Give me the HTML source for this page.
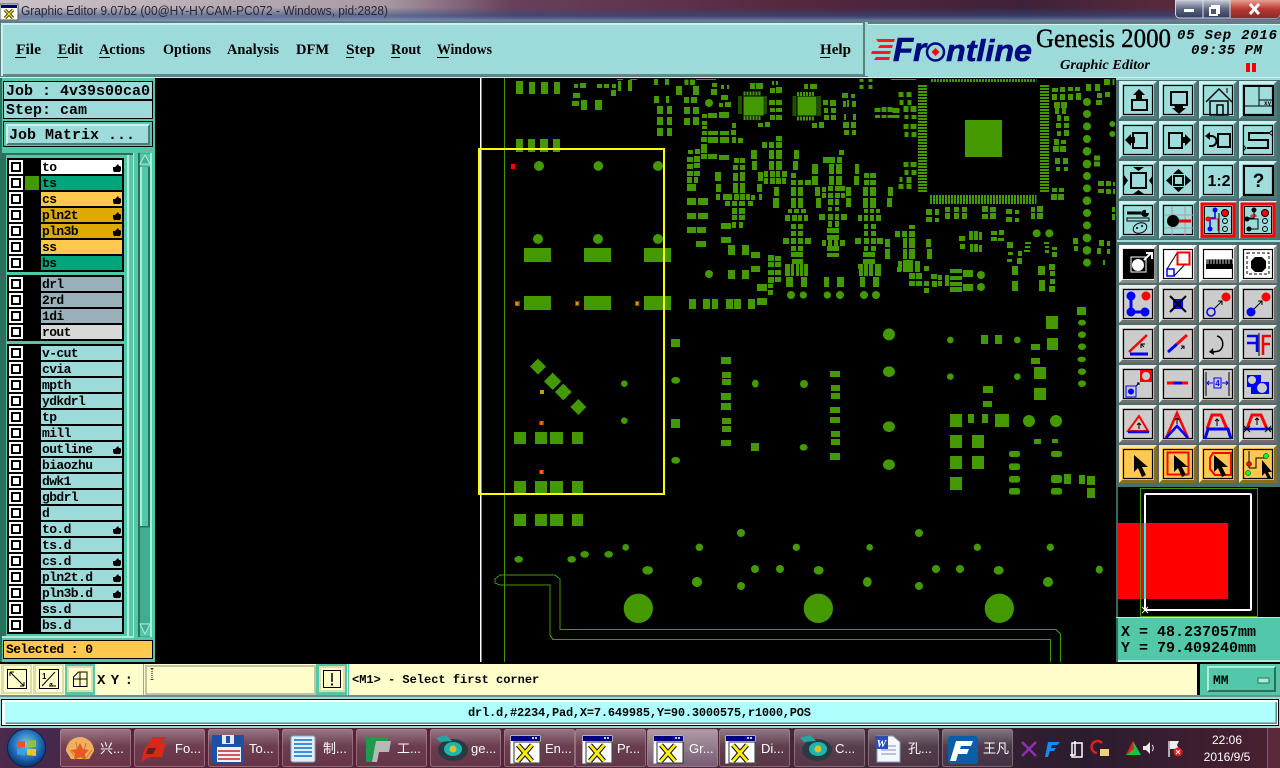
<!DOCTYPE html>
<html lang="zh"><head><meta charset="utf-8"><title>Graphic Editor</title>
<style>
html,body{margin:0;padding:0;background:#000;width:1280px;height:768px;overflow:hidden}
svg{display:block}
text{white-space:pre}
.m{font:bold 15px "Liberation Serif",serif;fill:#000}
.mono{font:bold 15px "Liberation Mono",monospace;fill:#000}
.l{font:bold 13px "Liberation Mono",monospace;letter-spacing:-.6px;fill:#000}
.s{font:bold 12px "Liberation Mono",monospace;fill:#000}
.t{font:13px "Liberation Sans","Noto Sans CJK SC",sans-serif;fill:#fff}
.c{font:12px "Liberation Sans",sans-serif;fill:#fff}
</style></head><body>
<svg width="1280" height="768" viewBox="0 0 1280 768" xmlns="http://www.w3.org/2000/svg">
<defs>
<linearGradient id="tb" x1="0" x2="1" y1="0" y2="0"><stop offset="0" stop-color="#cbc3c8"/><stop offset=".3" stop-color="#a89aa4"/><stop offset=".4" stop-color="#68405a"/><stop offset=".62" stop-color="#55283e"/><stop offset=".8" stop-color="#3e2138"/><stop offset=".92" stop-color="#5a2a3c"/><stop offset="1" stop-color="#6a3040"/></linearGradient>
<linearGradient id="tb2" x1="0" x2="0" y1="0" y2="1"><stop offset=".35" stop-color="#2a4a80" stop-opacity="0"/><stop offset=".75" stop-color="#2c4e88" stop-opacity=".6"/><stop offset="1" stop-color="#7e90b0" stop-opacity=".85"/></linearGradient>
<linearGradient id="task" x1="0" x2="1" y1="0" y2="0"><stop offset="0" stop-color="#6b2a42"/><stop offset=".1" stop-color="#5a2238"/><stop offset=".5" stop-color="#552338"/><stop offset=".7" stop-color="#3f2536"/><stop offset=".85" stop-color="#2a1c2e"/><stop offset="1" stop-color="#4a2030"/></linearGradient>
<linearGradient id="tbtn" x1="0" x2="0" y1="0" y2="1"><stop offset="0" stop-color="#fff" stop-opacity=".38"/><stop offset=".45" stop-color="#fff" stop-opacity=".12"/><stop offset="1" stop-color="#fff" stop-opacity=".08"/></linearGradient>
<linearGradient id="tact" x1="0" x2="0" y1="0" y2="1"><stop offset="0" stop-color="#fff" stop-opacity=".55"/><stop offset="1" stop-color="#cfd6f0" stop-opacity=".32"/></linearGradient>
<radialGradient id="orb" cx=".5" cy=".4" r=".6"><stop offset="0" stop-color="#7ec8f0"/><stop offset=".6" stop-color="#1f6fb8"/><stop offset="1" stop-color="#0f2f6a"/></radialGradient>
<linearGradient id="cl" x1="0" x2="0" y1="0" y2="1"><stop offset="0" stop-color="#e8a090"/><stop offset=".5" stop-color="#b83a30"/><stop offset="1" stop-color="#8a2a2a"/></linearGradient>
<linearGradient id="wb" x1="0" x2="0" y1="0" y2="1"><stop offset="0" stop-color="#c8cdd8"/><stop offset=".5" stop-color="#5d6680"/><stop offset="1" stop-color="#303a5c"/></linearGradient>
<symbol id="bt" width="38" height="38" viewBox="0 0 38 38"><rect width="38" height="38" fill="#c9f1f1"/><path d="M38 0V38H0L3 35H35V3z" fill="#4a7c7c"/><rect x="3" y="3" width="32" height="32" fill="#9fdcdc"/><rect x="4.5" y="4.5" width="29" height="29" fill="none" stroke="#000" stroke-width="1.2"/></symbol>
<symbol id="bw" width="38" height="38" viewBox="0 0 38 38"><rect width="38" height="38" fill="#fff"/><path d="M38 0V38H0L3 35H35V3z" fill="#8a8a8a"/><rect x="4.5" y="4.5" width="29" height="29" fill="none" stroke="#000" stroke-width="1.2"/></symbol>
<symbol id="bg" width="38" height="38" viewBox="0 0 38 38"><rect width="38" height="38" fill="#ececec"/><path d="M38 0V38H0L3 35H35V3z" fill="#6e6e6e"/><rect x="3" y="3" width="32" height="32" fill="#cccccc"/><rect x="4.5" y="4.5" width="29" height="29" fill="none" stroke="#000" stroke-width="1.2"/></symbol>
<symbol id="bo" width="38" height="38" viewBox="0 0 38 38"><rect width="38" height="38" fill="#ffe2a0"/><path d="M38 0V38H0L3 35H35V3z" fill="#8a6c20"/><rect x="3" y="3" width="32" height="32" fill="#ffc84f"/><rect x="4.5" y="4.5" width="29" height="29" fill="none" stroke="#000" stroke-width="1.2"/></symbol>
<symbol id="cb" width="14" height="14" viewBox="0 0 14 14"><rect width="14" height="14" fill="#fff"/><rect x="2" y="2" width="10" height="10" fill="#000"/><rect x="4" y="4" width="6" height="6" fill="#fff"/></symbol>
<symbol id="h" width="8" height="8" viewBox="0 0 8 8"><path d="M0 3h2L5 0l1 2h1l1 1v3L7 8H1L0 6z" fill="#000"/></symbol>
<symbol id="cur" width="16" height="24" viewBox="0 0 16 24"><path d="M0 0L0 17 4 13 8 22 12 20 8 12 14 12z" fill="#000"/></symbol>
<symbol id="xw" width="31" height="29" viewBox="0 0 31 29"><rect width="31" height="29" fill="#fff" stroke="#666"/><rect x="1" y="1" width="29" height="5" fill="#000080"/><rect x="22" y="2" width="2" height="2" fill="#ccc"/><rect x="25" y="2" width="2" height="2" fill="#ccc"/><rect x="4" y="7" width="26" height="21" fill="#fff" stroke="#333"/><path d="M8 10l14 16M22 10L8 26" stroke="#000" stroke-width="5"/><path d="M8 10l14 16M22 10L8 26" stroke="#ffee00" stroke-width="3"/></symbol>
</defs>

<!-- title bar -->
<rect width="1280" height="21" fill="url(#tb)"/><rect width="1280" height="21" fill="url(#tb2)"/>
<rect x="0" y="4" width="18" height="16" fill="#fff" stroke="#555"/><rect x="1" y="5" width="16" height="3" fill="#000080"/>
<path d="M5 10l8 8M13 10l-8 8" stroke="#000" stroke-width="3"/><path d="M5 10l8 8M13 10l-8 8" stroke="#ffe800" stroke-width="1.5"/>
<text x="21" y="15" textLength="367" lengthAdjust="spacingAndGlyphs" style="font:13px 'Liberation Sans',sans-serif;fill:#2a2430">Graphic Editor 9.07b2 (00@HY-HYCAM-PC072 - Windows, pid:2828)</text>
<path d="M1175.500 0v14a4 4 0 0 0 4 4H1276a4 4 0 0 0 4-4V0z" fill="url(#wb)" stroke="#cfd4e0"/>
<path d="M1230 0h50v14a4 4 0 0 1-4 4h-46z" fill="url(#cl)"/><path d="M1203 0v18M1230 0v18" stroke="#dde" stroke-width="1"/>
<rect x="1184" y="9" width="10" height="3" fill="#fff"/>
<rect x="1212" y="6" width="7" height="7" fill="none" stroke="#fff" stroke-width="2"/><rect x="1210" y="8" width="7" height="7" fill="#4b5470" stroke="#fff" stroke-width="2"/>
<path d="M1250 4l9 10M1259 4l-9 10" stroke="#fff" stroke-width="3"/>

<!-- menu bar -->
<rect y="21" width="1280" height="57" fill="#5e7f7f"/>
<rect x="1" y="23" width="862" height="53" fill="#c9f1f1"/><rect x="3" y="25" width="860" height="49" fill="#9ddbdb"/><rect x="3" y="74" width="860" height="2" fill="#5f8a8a"/>
<rect x="865" y="22" width="3" height="54" fill="#9ddbdb"/><rect x="0" y="77" width="1280" height="1" fill="#c9f1f1"/>
<rect x="868" y="24" width="412" height="53" fill="#9ddbdb"/><rect x="868" y="24" width="412" height="1" fill="#d5f5f5"/>
<g><text class="m" x="16" y="54" textLength="25" lengthAdjust="spacingAndGlyphs">File</text><text class="m" x="58" y="54" textLength="25" lengthAdjust="spacingAndGlyphs">Edit</text><text class="m" x="99" y="54" textLength="46" lengthAdjust="spacingAndGlyphs">Actions</text><text class="m" x="163" y="54" textLength="48" lengthAdjust="spacingAndGlyphs">Options</text><text class="m" x="227" y="54" textLength="52" lengthAdjust="spacingAndGlyphs">Analysis</text><text class="m" x="296" y="54" textLength="33" lengthAdjust="spacingAndGlyphs">DFM</text><text class="m" x="346" y="54" textLength="29" lengthAdjust="spacingAndGlyphs">Step</text><text class="m" x="391" y="54" textLength="30" lengthAdjust="spacingAndGlyphs">Rout</text><text class="m" x="437" y="54" textLength="55" lengthAdjust="spacingAndGlyphs">Windows</text><text class="m" x="820" y="54" textLength="31" lengthAdjust="spacingAndGlyphs">Help</text></g>
<path d="M15 57.500h11M57 57.500h11M99 57.500h11M346 57.500h8M391 57.500h9M437 57.500h12M820 57.500h10" stroke="#000"/>

<!-- logo -->
<path d="M876 39h19l-1 3h-16zM880 45h13l-1 3h-14zM872 51h19l-1 3h-19zM876 57h14l-1 3h-15z" fill="#ff1a1a"/>
<text x="893" y="61" textLength="33" lengthAdjust="spacingAndGlyphs" style="font:italic bold 33px 'Liberation Sans',sans-serif;fill:#000a80;stroke:#000a80;stroke-width:.6">Fr</text>
<circle cx="935.500" cy="52" r="8.500" fill="none" stroke="#000a80" stroke-width="2.500"/><path d="M935.500 48l4 4-4 4-4-4z" fill="#f00"/>
<text x="946" y="61" textLength="86" lengthAdjust="spacingAndGlyphs" style="font:italic bold 31px 'Liberation Sans',sans-serif;fill:#000a80;stroke:#000a80;stroke-width:.6">ntline</text>
<text x="1036" y="47" textLength="135" lengthAdjust="spacingAndGlyphs" style="font:26px 'Liberation Serif',serif;fill:#000;stroke:#000;stroke-width:.4">Genesis 2000</text>
<text x="1060" y="69" textLength="90" lengthAdjust="spacingAndGlyphs" style="font:italic bold 14px 'Liberation Serif',serif;fill:#000">Graphic Editor</text>
<text x="1177" y="39" textLength="100" style="font:italic bold 14px 'Liberation Mono',monospace;fill:#000">05 Sep 2016</text>
<text x="1191" y="54" textLength="71" style="font:italic bold 14px 'Liberation Mono',monospace;fill:#000">09:35 PM</text>
<rect x="1246" y="63" width="4" height="9" fill="#f00"/><rect x="1252" y="63" width="4" height="9" fill="#f00"/>

<!-- canvas -->
<rect x="156" y="78" width="961" height="586" fill="#000"/>
<g fill="#449900" shape-rendering="crispEdges">
<g transform="translate(640 78) scale(.33333)">
<path d="M42 3h12v18h-12zM75 3h12v18h-12zM133 5h12v16h-12zM150 5h15v16h-15zM108 24h18v27h-18zM159 24h18v27h-18zM42 54h15v21h-15zM78 54h9v21h-9zM132 57h15v18h-15zM153 57h18v18h-18zM51 84h18v24h-18zM81 84h15v24h-15zM132 87h18v21h-18zM159 87h18v21h-18zM51 117h18v24h-18zM81 117h15v24h-15zM132 120h18v21h-18zM159 117h18v24h-18zM51 150h18v24h-18zM81 150h15v24h-15z
M168 3h60v3h-60zM216 15h15v12h-15zM213 33h18v18h-18zM243 21h9v12h-9zM261 21h6v12h-6zM243 51h21v15h-21zM237 75h12v12h-12zM255 72h18v15h-18z
M310 55h60v58h-60zM472 55h58v58h-58zM330 15h15v18h-15zM348 15h21v18h-21zM396 9h6v12h-6zM408 9h6v12h-6zM390 30h15v15h-15zM408 27h18v18h-18zM387 66h18v15h-18zM408 66h18v15h-18zM390 90h15v12h-15zM408 90h18v12h-18zM390 111h15v15h-15zM408 111h18v15h-18zM354 135h15v12h-15zM375 132h15v15h-15z
M492 18h12v15h-12zM510 18h21v15h-21zM549 66h15v15h-15zM570 66h18v18h-18zM552 90h12v15h-12zM573 90h15v15h-15zM552 111h15v15h-15zM573 111h15v15h-15zM516 135h15v15h-15zM537 132h15v18h-15z
M606 45h18v15h-18zM633 48h12v12h-12zM609 69h9v18h-9zM621 66h6v21h-6zM636 69h12v18h-12zM612 108h6v18h-6zM639 108h9v18h-9zM609 132h18v18h-18zM633 132h15v18h-15zM612 156h15v15h-15zM636 156h12v15h-12zM658 3h12v9h-12zM685 3h12v9h-12zM658 21h12v12h-12zM685 21h12v12h-12zM753 3h75v3h-75z
M775 42h15v15h-15zM799 42h15v15h-15zM778 66h12v15h-12zM802 66h12v15h-12zM790 84h15v18h-15zM811 84h18v18h-18zM703 90h18v12h-18zM724 87h15v15h-15zM742 87h15v15h-15zM757 90h21v15h-21zM705 111h15v9h-15zM724 111h15v9h-15zM742 111h36v9h-36zM793 111h12v12h-12zM814 111h15v12h-15zM790 138h15v15h-15zM811 138h18v15h-18zM793 162h12v15h-12zM814 162h15v15h-15zM790 252h15v15h-15zM811 252h18v15h-18zM793 276h12v15h-12zM814 276h15v15h-15zM778 297h9v15h-9zM799 297h15v18h-15zM775 318h15v15h-15zM799 318h15v15h-15z
M975 126h111v111h-111z
M1236 30h18v12h-18zM1260 27h15v15h-15zM1284 27h15v12h-15zM1305 27h15v12h-15zM1236 48h15v18h-15zM1260 48h15v18h-15zM1284 48h15v18h-15zM1308 45h15v21h-15zM1338 18h15v21h-15zM1365 18h15v21h-15zM1392 3h18v18h-18zM1417 3h6v18h-6zM1371 45h15v15h-15zM1395 42h15v15h-15zM1368 66h18v15h-18zM1242 72h18v18h-18zM1263 72h18v18h-18zM1245 90h12v18h-12zM1266 90h12v18h-12zM1251 111h12v18h-12zM1272 114h15v15h-15zM1248 135h15v15h-15zM1272 135h15v15h-15zM1251 159h12v15h-12zM1272 156h15v18h-15zM1242 183h15v18h-15zM1263 186h15v12h-15zM1239 204h18v18h-18zM1260 204h18v18h-18zM1245 240h15v18h-15zM1269 240h15v18h-15zM1248 267h12v12h-12zM1272 267h12v12h-12zM1236 330h15v12h-15zM1257 330h15v12h-15zM1233 348h18v18h-18zM1254 348h18v18h-18z
M1362 232h18v15h-18zM1362 250h18v15h-18zM1374 309h18v15h-18zM1398 309h15v15h-15zM1419 312h6v12h-6zM1374 333h18v12h-18zM1398 333h15v15h-15zM1419 333h6v15h-6zM1416 387h9v15h-9zM1416 408h9v18h-9zM1299 480h15v18h-15zM1302 504h12v15h-12zM1377 486h15v18h-15zM1401 489h9v15h-9zM1371 510h12v18h-12zM1401 513h9v15h-9zM1389 546h6v15h-6z
M144 216h15v12h-15zM165 213h15v15h-15zM141 237h18v15h-18zM162 234h18v18h-18zM141 258h18v15h-18zM162 255h18v15h-18zM141 279h18v15h-18zM162 279h18v15h-18zM141 297h15v18h-15zM162 297h12v18h-12zM141 318h27v21h-27zM141 360h27v21h-27zM174 360h30v21h-30zM141 405h27v18h-27zM174 405h30v18h-30zM141 447h27v18h-27zM171 447h27v18h-27zM168 489h30v18h-30z
M186 108h15v12h-15zM204 105h27v15h-27zM237 102h30v18h-30zM186 129h15v12h-15zM186 144h15v9h-15zM186 159h15v12h-15zM204 159h30v12h-30zM240 159h27v12h-27zM273 156h15v15h-15zM183 177h18v15h-18zM204 177h30v18h-30zM240 177h27v18h-27zM276 177h12v18h-12zM294 180h15v15h-15zM276 135h12v15h-12zM183 198h18v15h-18zM183 213h18v12h-18zM183 228h18v15h-18zM204 228h27v15h-27zM237 231h30v15h-30z
M225 282h18v27h-18zM228 318h15v24h-15zM228 348h12v18h-12zM249 348h15v18h-15zM264 348h12v18h-12zM282 348h15v18h-15zM300 348h15v18h-15zM318 348h12v18h-12zM333 351h12v15h-12zM357 348h9v18h-9zM255 369h15v15h-15zM276 369h15v15h-15zM297 369h18v15h-18zM324 369h15v15h-15zM282 240h15v15h-15zM300 240h15v15h-15zM279 261h15v15h-15zM300 261h15v15h-15zM279 285h15v24h-15zM300 282h15v27h-15zM279 315h15v30h-15zM300 315h15v30h-15zM354 282h15v27h-15zM351 318h15v24h-15zM333 216h18v27h-18zM336 249h15v27h-15zM366 192h15v18h-15zM387 192h15v18h-15zM408 174h18v15h-18zM408 192h18v18h-18zM387 216h15v27h-15zM408 216h18v27h-18zM387 249h15v27h-15zM408 249h18v27h-18zM372 279h12v18h-12zM390 279h15v18h-15zM408 279h12v18h-12zM426 279h15v18h-15zM372 300h12v18h-12zM390 300h15v18h-15zM408 300h15v18h-15zM426 300h12v18h-12zM402 327h15v27h-15zM399 360h18v30h-18z
M276 390h15v18h-15zM297 390h18v18h-18zM276 411h15v15h-15zM297 411h18v15h-18zM276 432h12v18h-12zM297 432h12v18h-12zM243 435h30v18h-30zM243 477h30v18h-30zM264 501h21v30h-21zM306 501h21v30h-21zM333 522h27v18h-27zM333 564h27v18h-27zM264 576h21v27h-21zM306 576h21v27h-21z
M384 531h18v18h-18zM405 534h18v15h-18zM384 552h18v15h-18zM405 552h18v15h-18zM384 576h18v15h-18zM405 576h18v15h-18zM384 597h18v18h-18zM405 597h18v15h-18zM384 618h15v12h-15zM384 636h15v15h-15zM351 618h30v21h-30zM351 660h30v21h-30zM147 663h21v30h-21zM189 663h21v30h-21zM216 663h18v30h-18zM258 663h21v30h-21zM282 663h21v30h-21zM324 663h21v30h-21z
M462 216h15v27h-15zM459 249h15v27h-15zM453 285h15v15h-15zM453 306h15v15h-15zM474 306h15v15h-15zM495 306h18v15h-18zM453 327h15v27h-15zM474 327h15v27h-15zM453 360h15v30h-15zM474 360h15v30h-15zM444 393h12v12h-12zM462 393h15v12h-15zM483 393h15v12h-15zM435 411h15v18h-15zM456 411h15v18h-15zM474 411h12v18h-12zM492 411h12v18h-12zM453 438h15v15h-15zM474 438h15v15h-15zM453 459h15v15h-15zM474 459h15v15h-15zM429 480h18v18h-18zM453 480h15v18h-15zM474 480h15v18h-15zM495 480h18v18h-18zM453 504h15v15h-15zM474 504h15v15h-15zM453 522h36v15h-36zM456 543h33v15h-33zM435 558h15v36h-15zM453 558h9v36h-9zM468 558h9v36h-9zM480 558h9v36h-9zM492 558h12v36h-12zM438 597h21v30h-21zM483 597h18v30h-18z
M516 258h18v30h-18zM516 294h18v27h-18zM525 327h15v27h-15zM528 360h15v30h-15zM597 216h15v15h-15zM591 237h15v18h-15zM549 237h18v18h-18zM567 237h18v18h-18zM567 258h15v30h-15zM588 258h18v30h-18zM567 294h15v27h-15zM588 294h18v27h-18zM645 258h12v30h-12zM642 294h15v27h-15zM546 327h12v15h-12zM564 324h15v15h-15zM585 324h15v15h-15zM600 324h15v15h-15zM546 345h12v15h-12zM564 345h15v15h-15zM585 345h15v15h-15zM603 345h12v15h-12zM618 327h15v27h-15zM618 360h15v27h-15zM564 363h15v18h-15zM585 363h12v18h-12zM564 387h12v12h-12zM585 387h12v12h-12zM537 408h18v18h-18zM564 408h15v18h-15zM585 408h12v18h-12zM603 408h18v18h-18zM564 429h12v18h-12zM585 429h12v18h-12zM561 450h36v15h-36zM561 471h36v15h-36zM546 486h12v18h-12zM564 486h12v18h-12zM582 486h12v18h-12zM600 486h15v18h-15zM561 504h36v15h-36zM561 525h36v12h-36zM552 597h15v30h-15zM591 597h21v30h-21z
M672 285h15v15h-15zM690 285h18v15h-18zM672 306h15v15h-15zM690 306h18v15h-18zM669 327h15v27h-15zM690 327h18v27h-18zM669 360h15v30h-15zM690 360h18v30h-18zM744 327h15v27h-15zM741 360h15v27h-15zM672 393h12v12h-12zM690 393h12v12h-12zM708 393h12v12h-12zM654 411h12v18h-12zM672 411h12v18h-12zM690 411h12v18h-12zM708 411h15v18h-15zM672 438h12v15h-12zM693 438h15v15h-15zM672 459h12v15h-12zM693 459h15v15h-15zM645 480h18v18h-18zM672 480h15v18h-15zM693 480h15v18h-15zM711 480h18v18h-18zM735 483h15v24h-15zM735 513h15v30h-15zM672 504h12v15h-12zM693 504h15v15h-15zM669 522h36v15h-36zM669 543h36v15h-36zM654 558h12v15h-12zM657 558h12v36h-12zM672 558h12v36h-12zM687 558h12v36h-12zM705 558h18v36h-18zM660 597h15v30h-15zM699 597h18v30h-18z
M807 441h18v12h-18zM765 459h15v18h-15zM786 459h15v18h-15zM807 459h18v18h-18zM789 480h12v30h-12zM807 480h18v30h-18zM789 513h12v30h-12zM807 513h18v30h-18zM858 483h15v24h-15zM861 513h15v30h-15zM771 567h12v15h-12zM774 549h12v30h-12zM789 546h18v36h-18zM807 546h12v36h-12zM825 549h15v33h-15zM852 564h15v15h-15zM807 585h18v18h-18zM828 585h18v18h-18zM873 588h18v15h-18zM894 591h12v15h-12zM807 609h18v15h-18zM828 609h18v15h-18zM852 609h15v15h-15zM876 609h15v18h-15zM894 609h12v15h-12zM852 630h15v15h-15zM915 591h12v18h-12zM915 609h12v15h-12zM930 573h36v12h-36zM930 594h36v12h-36zM930 612h36v12h-36zM930 627h36v15h-36zM969 576h30v21h-30zM969 618h30v21h-30z
M858 393h18v18h-18zM885 393h12v18h-12zM858 417h18v15h-18zM885 420h12v12h-12zM915 387h15v15h-15zM942 387h15v15h-15zM966 387h15v15h-15zM915 405h15v18h-15zM942 405h15v18h-15zM966 405h15v18h-15zM1026 384h18v18h-18zM1050 387h18v15h-18zM1026 408h18v15h-18zM1050 405h18v18h-18zM1098 393h18v15h-18zM1125 396h12v12h-12zM1098 417h18v15h-18zM1125 420h12v12h-12zM1173 387h12v15h-12zM1191 384h18v18h-18zM1173 405h12v18h-12zM1191 405h18v18h-18z
M957 474h18v15h-18zM960 498h15v15h-15zM987 459h12v27h-12zM1002 459h12v27h-12zM1017 462h9v24h-9zM990 498h9v24h-9zM1002 498h12v24h-12zM1017 501h9v21h-9zM1053 459h18v12h-18zM1077 456h15v15h-15zM1053 477h18v12h-18zM1074 480h18v9h-18z
M1101 492h18v18h-18zM1104 522h15v9h-15zM1134 519h12v15h-12zM1101 543h15v9h-15zM1131 540h15v18h-15zM1155 492h18v6h-18zM1155 504h15v6h-15zM1152 516h18v6h-18zM1212 492h15v6h-15zM1215 504h12v6h-12zM1215 516h12v9h-12zM1236 507h15v9h-15zM1236 522h15v15h-15zM1116 564h18v27h-18zM1116 609h18v30h-18zM1194 564h21v27h-21zM1197 606h18v33h-18zM1227 558h18v18h-18zM1230 579h15v15h-15zM1230 603h15v15h-15zM1227 624h18v18h-18zM1311 687h27v24h-27zM1218 714h36v6h-36z"/>
<g fill="none" stroke="#449900">
<path stroke-width="27" stroke-dasharray="6 3" d="M847.500 21V342M1213.500 21V342"/>
<path stroke-width="9" stroke-dasharray="6 3" d="M873 7.500H1190"/>
<path stroke-width="27" stroke-dasharray="6 3" d="M870 364.500H1190"/>
<path stroke-width="12" stroke-dasharray="3 3" d="M300 55V110M375 55V110M463 55V113M537 55V113"/>
<path stroke-width="12" stroke-dasharray="6 3" d="M310 46H365M471 48H525"/>
<path stroke-width="12" stroke-dasharray="6 3" d="M310 120H365M471 122H522"/>
</g>
<g shape-rendering="geometricPrecision">
<circle cx="207" cy="75" r="12"/><circle cx="207" cy="588" r="12"/><circle cx="1341" cy="72" r="12"/><circle cx="1341" cy="108" r="12"/><circle cx="1341" cy="145" r="12"/><circle cx="1341" cy="183" r="12"/><circle cx="1341" cy="220" r="13"/><circle cx="1341" cy="258" r="13"/><circle cx="1341" cy="294" r="12"/><circle cx="1341" cy="331" r="12"/><circle cx="1341" cy="368" r="13"/><circle cx="1341" cy="405" r="12"/><circle cx="1341" cy="442" r="12"/><circle cx="1341" cy="480" r="13"/><circle cx="1341" cy="517" r="13"/><circle cx="1341" cy="554" r="12"/><circle cx="1417" cy="138" r="9"/><circle cx="1417" cy="168" r="9"/>
<circle cx="1023" cy="591" r="12"/><circle cx="1023" cy="627" r="12"/><circle cx="1190" cy="466" r="12"/><circle cx="1228" cy="466" r="12"/><circle cx="453" cy="651" r="12"/><circle cx="490" cy="651" r="11"/><circle cx="562" cy="651" r="11"/><circle cx="600" cy="651" r="12"/><circle cx="672" cy="651" r="12"/><circle cx="708" cy="651" r="12"/>
</g></g>
<g transform="translate(470 78) scale(.33333)">
<path d="M138 9h21v39h-21zM177 12h18v36h-18zM213 12h21v36h-21zM252 12h18v36h-18zM138 183h21v39h-21zM174 183h21v39h-21zM210 183h24v39h-24zM249 183h21v39h-21zM312 18h12v12h-12zM330 15h18v15h-18zM381 18h15v12h-15zM402 18h15v12h-15zM426 18h12v12h-12zM309 45h21v15h-21zM306 69h21v15h-21zM333 66h18v30h-18zM375 66h21v30h-21zM423 36h15v18h-15zM444 9h9v30h-9zM474 6h12v33h-12zM441 3h18v3h-18zM480 3h21v3h-21zM162 510h81v42h-81zM342 510h81v42h-81zM522 510h81v42h-81zM162 654h81v42h-81zM342 654h81v42h-81zM522 654h81v42h-81z"/>
<g shape-rendering="geometricPrecision"><circle cx="207" cy="264" r="15"/><circle cx="385" cy="264" r="14.500"/><circle cx="564" cy="264" r="15"/><circle cx="204" cy="483" r="15"/><circle cx="384" cy="483" r="15"/><circle cx="564" cy="483" r="15"/></g>
<path d="M123 258h12v15h-12zM135 669h15v15h-15zM315 669h12v15h-12zM495 669h12v15h-12z" fill="#f00"/>
<path d="M136 672h10v10h-10zM318 672h8v9h-8zM498 672h7v9h-7z" fill="#c8a000"/>
</g>
<g transform="translate(470 340) scale(.33333)">
<path d="M132 276h36v36h-36zM195 276h36v36h-36zM240 276h39v36h-39zM306 276h33v36h-33zM132 423h36v36h-36zM195 423h36v36h-36zM240 423h39v36h-39zM306 423h33v36h-33zM132 522h36v36h-36zM195 522h36v36h-36zM240 522h39v36h-39zM306 522h33v36h-33zM603 0h27v21h-27zM603 237h27v27h-27z"/>
<g shape-rendering="geometricPrecision">
<path d="M204 56l24 24-24 24-24-24zM248 98l26 26-26 26-26-26zM280 131l25 25-25 25-25-25zM325 177l24 24-24 24-24-24z"/>
<circle cx="463" cy="131" r="10"/><circle cx="463" cy="242" r="10"/><ellipse cx="617" cy="121" rx="13" ry="10"/><ellipse cx="617" cy="361" rx="13" ry="10"/><ellipse cx="146" cy="658" rx="13" ry="10"/><ellipse cx="305" cy="658" rx="13" ry="10"/><ellipse cx="344" cy="643" rx="13" ry="10"/><ellipse cx="416" cy="643" rx="13" ry="10"/><circle cx="467" cy="622" r="10"/><circle cx="688" cy="622" r="11"/><ellipse cx="533" cy="691" rx="16" ry="13"/><circle cx="681" cy="726" r="15"/><circle cx="505" cy="805" r="44"/>
</g>
<path d="M210 150h12v12h-12z" fill="#c8a000"/>
<path d="M207 243h15v12h-15zM207 390h15v12h-15z" fill="#f00"/><path d="M211 243h7v12h-7zM211 390h7v12h-7z" fill="#c8a000"/>
</g>
<g transform="translate(660 310) scale(.33333)">
<path d="M33 87h27v24h-27zM33 327h27v27h-27zM183 141h30v21h-30zM186 186h27v18h-27zM186 207h27v18h-27zM183 249h30v21h-30zM183 279h30v21h-30zM186 324h27v18h-27zM186 348h27v18h-27zM183 390h30v18h-30zM510 183h30v18h-30zM513 225h27v18h-27zM513 249h27v18h-27zM510 291h30v18h-30zM510 321h30v18h-30zM513 363h27v18h-27zM513 387h27v18h-27zM510 429h30v21h-30zM273 399h24v24h-24zM963 75h21v27h-21zM1005 75h21v27h-21zM1158 18h36v39h-36zM1161 84h33v36h-33zM1113 102h27v18h-27zM1113 144h27v18h-27zM1122 171h36v36h-36zM1122 234h36v36h-36zM969 228h30v21h-30zM969 273h27v18h-27zM870 312h36v39h-36zM924 312h18v27h-18zM966 312h18v27h-18zM1005 312h42v39h-42zM1122 387h21v15h-21zM1176 387h18v12h-18zM870 375h36v39h-36zM936 375h36v39h-36zM870 438h36v39h-36zM936 438h36v39h-36zM870 501h36v39h-36zM1212 492h21v30h-21zM1257 495h18v27h-18zM1281 498h24v27h-24zM1281 534h24v30h-24zM1251 0h27v15h-27z"/>
<g shape-rendering="geometricPrecision">
<ellipse cx="47" cy="211" rx="13" ry="10"/><ellipse cx="47" cy="451" rx="13" ry="10"/><ellipse cx="286" cy="221" rx="10" ry="12"/><circle cx="432" cy="222" r="12"/><ellipse cx="431" cy="412" rx="12" ry="10"/><circle cx="687" cy="73" r="18"/><ellipse cx="687" cy="185" rx="18" ry="16"/><ellipse cx="687" cy="350" rx="18" ry="16"/><ellipse cx="687" cy="464" rx="18" ry="16"/><circle cx="871" cy="90" r="10"/><circle cx="871" cy="200" r="10"/><circle cx="1072" cy="90" r="10"/><circle cx="1072" cy="200" r="10"/><circle cx="1107" cy="333" r="18"/><circle cx="1188" cy="333" r="18"/>
<rect x="1047" y="423" width="33" height="18" rx="7"/><rect x="1047" y="460" width="33" height="20" rx="7"/><rect x="1047" y="498" width="33" height="20" rx="7"/><rect x="1047" y="534" width="33" height="20" rx="7"/><rect x="1173" y="423" width="33" height="18" rx="7"/><rect x="1173" y="495" width="33" height="24" rx="7"/><rect x="1173" y="534" width="33" height="20" rx="7"/>
<ellipse cx="1266" cy="38" rx="12" ry="9"/><ellipse cx="1266" cy="74" rx="12" ry="10"/><ellipse cx="1266" cy="110" rx="12" ry="10"/><ellipse cx="1265" cy="148" rx="13" ry="8"/><ellipse cx="1266" cy="185" rx="12" ry="10"/><ellipse cx="1266" cy="221" rx="12" ry="10"/>
<circle cx="243" cy="669" r="12"/><circle cx="777" cy="669" r="12"/><circle cx="118" cy="712" r="11"/><circle cx="409" cy="712" r="11"/><circle cx="629" cy="712" r="10"/><circle cx="952" cy="712" r="11"/><circle cx="1171" cy="712" r="11"/><circle cx="285" cy="777" r="12"/><circle cx="360" cy="777" r="12"/><circle cx="828" cy="777" r="12"/><circle cx="900" cy="777" r="12"/><ellipse cx="476" cy="781" rx="15" ry="13"/><ellipse cx="1016" cy="781" rx="15" ry="13"/><circle cx="111" cy="816" r="15"/><ellipse cx="622" cy="816" rx="13" ry="15"/><circle cx="1164" cy="816" r="15"/><circle cx="243" cy="828" r="12"/><circle cx="777" cy="828" r="12"/><ellipse cx="1318" cy="779" rx="11" ry="12"/><circle cx="475" cy="895" r="44"/><circle cx="1018" cy="895" r="44"/>
</g></g>
</g>
<g fill="none" shape-rendering="crispEdges">
<path d="M480.500 78V662" stroke="#fff" stroke-width="1.500"/>
<path d="M504.500 78V662" stroke="#449900" stroke-width="1.200"/>
<path d="M500 575H555L560 579V629.500H1056L1060.500 634V662M500 575L495 579V583L500 585H550V635L553 639.500H1050.500V662" stroke="#449900"/>
<rect x="479" y="149" width="185" height="345" stroke="#ffff00" stroke-width="2"/>
</g>

<!-- left panel -->
<rect x="0" y="78" width="157" height="586" fill="#52c8a8"/><rect x="0" y="78" width="2" height="584" fill="#2f6f60"/><rect x="155" y="78" width="2" height="584" fill="#000"/>
<rect x="3.500" y="81.500" width="149" height="18" fill="#9ddbdb" stroke="#000"/><rect x="3.500" y="100.500" width="149" height="18" fill="#9ddbdb" stroke="#000"/>
<text class="mono" x="6" y="95">Job : 4v39s00ca0</text><text class="mono" x="6" y="114">Step: cam</text>
<rect x="3.500" y="121.500" width="149" height="25" fill="#52c8a8" stroke="#000"/>
<rect x="6" y="124" width="144" height="21" fill="#c9f1f1"/><path d="M150 124V145H6L8 143H148V126z" fill="#4a7c7c"/><rect x="8" y="126" width="140" height="17" fill="#9ddbdb"/>
<text class="mono" x="9" y="139">Job Matrix ...</text>
<path d="M2 153H134V155H6V637H2z" fill="#2e6e5e"/>
<rect x="127" y="155" width="2" height="482" fill="#a8eed8"/><rect x="133" y="153" width="1" height="484" fill="#a8eed8"/><rect x="2" y="636" width="132" height="2" fill="#a8eed8"/>
<!-- scrollbar -->
<rect x="138" y="153" width="14" height="484" fill="#3fae90"/><rect x="138" y="153" width="2" height="484" fill="#2e6e5e"/><rect x="150" y="153" width="2" height="484" fill="#a8eed8"/>
<rect x="140" y="167" width="10" height="360" fill="#52c8a8"/><rect x="140" y="167" width="2" height="360" fill="#a8eed8"/><rect x="148" y="167" width="2" height="360" fill="#2e6e5e"/><rect x="140" y="526" width="10" height="1.500" fill="#2e6e5e"/>
<rect x="140" y="154" width="10" height="12" fill="#52c8a8"/><rect x="140" y="623" width="10" height="13" fill="#52c8a8"/>
<path d="M145 155l5 9h-10z" fill="#3fae90" stroke="#a8eed8"/><path d="M145 634l-5-10h10z" fill="#3fae90" stroke="#a8eed8"/>
<!-- layer groups -->
<rect x="7" y="158" width="117" height="114" fill="#000"/><rect x="7" y="275" width="117" height="66" fill="#000"/><rect x="7" y="344" width="117" height="290" fill="#000"/>
<g><rect x="25" y="176" width="14" height="14" fill="#449900"/>
<g id="g1">
<rect x="41" y="160" width="81" height="14" fill="#fff"/><rect x="41" y="176" width="81" height="14" fill="#00a67a"/><rect x="41" y="192" width="81" height="14" fill="#ffc84f"/><rect x="41" y="208" width="81" height="14" fill="#dcaa00"/><rect x="41" y="224" width="81" height="14" fill="#dcaa00"/><rect x="41" y="240" width="81" height="14" fill="#ffc84f"/><rect x="41" y="256" width="81" height="14" fill="#00a67a"/>
<rect x="41" y="277" width="81" height="14" fill="#9ab0bb"/><rect x="41" y="293" width="81" height="14" fill="#9ab0bb"/><rect x="41" y="309" width="81" height="14" fill="#9ab0bb"/><rect x="41" y="325" width="81" height="14" fill="#d8d8d8"/>
</g>
<path fill="#9ddbdb" d="M41 346h81v14h-81zM41 362h81v14h-81zM41 378h81v14h-81zM41 394h81v14h-81zM41 410h81v14h-81zM41 426h81v14h-81zM41 442h81v14h-81zM41 458h81v14h-81zM41 474h81v14h-81zM41 490h81v14h-81zM41 506h81v14h-81zM41 522h81v14h-81zM41 538h81v14h-81zM41 554h81v14h-81zM41 570h81v14h-81zM41 586h81v14h-81zM41 602h81v14h-81zM41 618h81v14h-81z"/>
<use href="#cb" x="9" y="160"/><use href="#cb" x="9" y="176"/><use href="#cb" x="9" y="192"/><use href="#cb" x="9" y="208"/><use href="#cb" x="9" y="224"/><use href="#cb" x="9" y="240"/><use href="#cb" x="9" y="256"/><use href="#cb" x="9" y="277"/><use href="#cb" x="9" y="293"/><use href="#cb" x="9" y="309"/><use href="#cb" x="9" y="325"/><use href="#cb" x="9" y="346"/><use href="#cb" x="9" y="362"/><use href="#cb" x="9" y="378"/><use href="#cb" x="9" y="394"/><use href="#cb" x="9" y="410"/><use href="#cb" x="9" y="426"/><use href="#cb" x="9" y="442"/><use href="#cb" x="9" y="458"/><use href="#cb" x="9" y="474"/><use href="#cb" x="9" y="490"/><use href="#cb" x="9" y="506"/><use href="#cb" x="9" y="522"/><use href="#cb" x="9" y="538"/><use href="#cb" x="9" y="554"/><use href="#cb" x="9" y="570"/><use href="#cb" x="9" y="586"/><use href="#cb" x="9" y="602"/><use href="#cb" x="9" y="618"/>
<use href="#h" x="113" y="164"/><use href="#h" x="113" y="196"/><use href="#h" x="113" y="212"/><use href="#h" x="113" y="228"/><use href="#h" x="113" y="446"/><use href="#h" x="113" y="526"/><use href="#h" x="113" y="558"/><use href="#h" x="113" y="574"/><use href="#h" x="113" y="590"/>
<text class="l" x="42" y="171">to</text><text class="l" x="42" y="187">ts</text><text class="l" x="42" y="203">cs</text><text class="l" x="42" y="219">pln2t</text><text class="l" x="42" y="235">pln3b</text><text class="l" x="42" y="251">ss</text><text class="l" x="42" y="267">bs</text>
<text class="l" x="42" y="288">drl</text><text class="l" x="42" y="304">2rd</text><text class="l" x="42" y="320">1di</text><text class="l" x="42" y="336">rout</text>
<text class="l" x="42" y="357">v-cut</text><text class="l" x="42" y="373">cvia</text><text class="l" x="42" y="389">mpth</text><text class="l" x="42" y="405">ydkdrl</text><text class="l" x="42" y="421">tp</text><text class="l" x="42" y="437">mill</text><text class="l" x="42" y="453">outline</text><text class="l" x="42" y="469">biaozhu</text><text class="l" x="42" y="485">dwk1</text><text class="l" x="42" y="501">gbdrl</text><text class="l" x="42" y="517">d</text><text class="l" x="42" y="533">to.d</text><text class="l" x="42" y="549">ts.d</text><text class="l" x="42" y="565">cs.d</text><text class="l" x="42" y="581">pln2t.d</text><text class="l" x="42" y="597">pln3b.d</text><text class="l" x="42" y="613">ss.d</text><text class="l" x="42" y="629">bs.d</text>
</g>
<rect x="3.500" y="640.500" width="149" height="18" fill="#ffc84f" stroke="#000"/>
<text class="l" x="6" y="653">Selected : 0</text>

<!-- right toolbar -->
<rect x="1116" y="78" width="164" height="409" fill="#4b6d6d"/><rect x="1116" y="78" width="164" height="2" fill="#9ddbdb"/><rect x="1117" y="240" width="163" height="2" fill="#9ddbdb"/>
<use href="#bt" x="1119" y="81"/><use href="#bt" x="1159" y="81"/><use href="#bt" x="1199" y="81"/><use href="#bt" x="1239" y="81"/><use href="#bt" x="1119" y="121"/><use href="#bt" x="1159" y="121"/><use href="#bt" x="1199" y="121"/><use href="#bt" x="1239" y="121"/><use href="#bt" x="1119" y="161"/><use href="#bt" x="1159" y="161"/><use href="#bt" x="1199" y="161"/><use href="#bt" x="1239" y="161"/><use href="#bt" x="1119" y="201"/><use href="#bt" x="1159" y="201"/><use href="#bt" x="1199" y="201"/><use href="#bt" x="1239" y="201"/>
<use href="#bw" x="1119" y="245"/><use href="#bw" x="1159" y="245"/><use href="#bw" x="1199" y="245"/><use href="#bw" x="1239" y="245"/>
<use href="#bg" x="1119" y="285"/><use href="#bg" x="1159" y="285"/><use href="#bg" x="1199" y="285"/><use href="#bg" x="1239" y="285"/><use href="#bg" x="1119" y="325"/><use href="#bg" x="1159" y="325"/><use href="#bg" x="1199" y="325"/><use href="#bg" x="1239" y="325"/><use href="#bg" x="1119" y="365"/><use href="#bg" x="1159" y="365"/><use href="#bg" x="1199" y="365"/><use href="#bg" x="1239" y="365"/><use href="#bg" x="1119" y="405"/><use href="#bg" x="1159" y="405"/><use href="#bg" x="1199" y="405"/><use href="#bg" x="1239" y="405"/>
<use href="#bo" x="1119" y="445"/><use href="#bo" x="1159" y="445"/><use href="#bo" x="1199" y="445"/><use href="#bo" x="1239" y="445"/>
<!-- teal icons -->
<g transform="translate(1119 81)"><rect x="13" y="19" width="15" height="10" fill="none" stroke="#000" stroke-width="2"/><path d="M20 8l6 6h-3v5h-6v-5h-3z"/></g>
<g transform="translate(1159 81)"><rect x="12" y="11" width="16" height="13" fill="none" stroke="#000" stroke-width="2"/><path d="M15 23h9v4h3l-7 6-7-6h3z"/></g>
<g transform="translate(1199 81)" fill="none" stroke="#000"><path d="M7 21L20 8 33 21" stroke-width="1.500"/><path d="M28 12V7" /><rect x="11" y="20" width="18" height="14" stroke-width="1.500"/><rect x="18" y="24" width="6" height="10" stroke-width="1.500"/></g>
<g transform="translate(1239 81)" fill="none" stroke="#000"><rect x="5" y="5" width="29" height="29" stroke-width="2"/><path d="M6 25h27M20 6v19M20 19h13" stroke-width="1"/><text x="25" y="24" style="font:bold 6px 'Liberation Mono',monospace;fill:#000;stroke:none">xy</text></g>
<g transform="translate(1119 121)"><rect x="14" y="12" width="14" height="15" fill="none" stroke="#000" stroke-width="2"/><path d="M6 19l6-6v3h4v6h-4v3z"/></g>
<g transform="translate(1159 121)"><rect x="10" y="12" width="13" height="15" fill="none" stroke="#000" stroke-width="2"/><path d="M32 19l-6-6v3h-4v6h4v3z"/></g>
<g transform="translate(1199 121)"><rect x="19" y="13" width="12" height="13" fill="none" stroke="#000" stroke-width="2"/><path d="M10 15h2a5 5 0 0 1 1 10h-3" fill="none" stroke="#000" stroke-width="2"/><path d="M6 15l5-4v8z"/></g>
<g transform="translate(1239 121)" fill="none" stroke="#000"><path d="M30 12H10v7h19v8H8" stroke-width="2"/><path d="M34 9l-4 3 4 3M4 24l3 3-3 3"/></g>
<g transform="translate(1119 161)"><rect x="12" y="12" width="15" height="15" fill="none" stroke="#000" stroke-width="2"/><path d="M14 6h11l-5.500 4zM14 33h11l-5.500-4zM5 14v11l4-5.500zM34 14v11l-4-5.500z"/></g>
<g transform="translate(1159 161)"><rect x="15" y="15" width="9" height="9" fill="none" stroke="#000" stroke-width="2"/><path d="M14 13h11l-5.500-5zM14 26h11l-5.500 5zM13 14v11l-6-5.500zM26 14v11l6-5.500z"/></g>
<text x="1219" y="186" text-anchor="middle" style="font:bold 16px 'Liberation Sans',sans-serif;fill:#000">1:2</text>
<g transform="translate(1239 161)"><rect x="5" y="5" width="29" height="29" fill="none" stroke="#000" stroke-width="2"/><text x="19.500" y="26" text-anchor="middle" style="font:bold 19px 'Liberation Sans',sans-serif;fill:#000">?</text></g>
<g transform="translate(1119 201)"><path d="M8 12h14" stroke="#000" stroke-width="3"/><path d="M22 12a4 4 0 1 0 8 0l-3 0 0-3a4 4 0 0 0-5 3z"/><path d="M8 17h22v3H8z" fill="none" stroke="#000"/><ellipse cx="21" cy="27" rx="7" ry="5" fill="none" stroke="#000" transform="rotate(-20 21 27)"/><circle cx="18" cy="27" r="1"/><circle cx="23" cy="25" r="1"/></g>
<g transform="translate(1159 201)"><path d="M5 14h29M5 27h29M13 5v29M26 5v29" stroke="#a0a0a0"/><path d="M14 20h18" stroke="#e00" stroke-width="3"/><circle cx="14" cy="20" r="6"/></g>
<g transform="translate(1199 201)" fill="none"><rect x="3" y="3" width="32" height="32" fill="#9ddbdb" stroke="#f00" stroke-width="3"/><rect x="5.500" y="5.500" width="27" height="27" stroke="#000"/><path d="M16 9v8h-5v11" stroke="#00f" stroke-width="1.500"/><path d="M9 18h10v12" stroke="#f00"/><path d="M20 12v20"  stroke="#000"/><circle cx="16" cy="9" r="2.500" fill="#00f"/><circle cx="11" cy="28" r="2.500" fill="#00f"/><circle cx="9" cy="18" r="2.500" fill="#f00"/><circle cx="26" cy="12" r="3.500" fill="#f00" stroke="#000"/><circle cx="26" cy="20" r="2.500" stroke="#000"/><circle cx="26" cy="28" r="2.500" stroke="#000"/></g>
<g transform="translate(1239 201)" fill="none"><rect x="3" y="3" width="32" height="32" fill="#9ddbdb" stroke="#f00" stroke-width="3"/><rect x="5.500" y="5.500" width="27" height="27" stroke="#000"/><path d="M15 9v8h-6M9 18h10v10h-9" stroke="#000"/><path d="M11 15h7M13 13v3M16 13v3" stroke="#f00"/><circle cx="15" cy="9" r="2.500" fill="#000"/><circle cx="10" cy="28" r="2.500" fill="#000"/><circle cx="8" cy="18" r="2.500" fill="#000"/><circle cx="26" cy="12" r="3.500" fill="#f00" stroke="#000"/><circle cx="26" cy="20" r="2.500" stroke="#000"/><circle cx="26" cy="28" r="2.500" stroke="#000"/></g>
<!-- white row -->
<g transform="translate(1119 245)"><rect x="5" y="4" width="30" height="30"/><rect x="12" y="12" width="15" height="15" fill="none" stroke="#fff"/><circle cx="19" cy="20" r="6" fill="#fff"/><path d="M25 15l7-7M27 8h6v6" stroke="#fff" stroke-width="2" fill="none"/></g>
<g transform="translate(1159 245)"><path d="M18 8L8 24M31 14L15 31" stroke="#000"/><rect x="18.500" y="7.500" width="12" height="12" fill="#fff" stroke="#f00" stroke-width="2"/><rect x="8" y="24" width="7" height="7" fill="#fff" stroke="#00f" stroke-width="1.500"/></g>
<g transform="translate(1199 245)"><path d="M7 23V14h27v9zM9 14v5M12 14v5M15 14v5M18 14v5M21 14v5M24 14v5M27 14v5M30 14v5" fill="#000" stroke="#fff" stroke-width=".8"/><rect x="7" y="19" width="27" height="5"/></g>
<g transform="translate(1239 245)"><rect x="8" y="8" width="22" height="21" fill="none" stroke="#000" stroke-dasharray="3 2"/><path d="M16 12h7l4 4v7l-4 4h-7l-4-4v-7z"/></g>
<!-- gray rows -->
<g transform="translate(1119 285)" fill="#00f"><path d="M12 11v16h14" stroke="#00f" stroke-width="3" fill="none"/><circle cx="12" cy="11" r="4.500"/><circle cx="12" cy="27" r="4.500"/><circle cx="26" cy="27" r="4.500"/><circle cx="27" cy="11" r="4.500" fill="#f00"/></g>
<g transform="translate(1159 285)"><rect x="14" y="14" width="10" height="10" fill="#00f"/><path d="M11 11l16 16M27 11L11 27" stroke="#000" stroke-width="2"/></g>
<g transform="translate(1199 285)"><circle cx="27" cy="12" r="4.500" fill="#f00"/><circle cx="12" cy="27" r="4" fill="none" stroke="#00f" stroke-width="1.500"/><path d="M15 24l8-8M19 16h4v4" fill="none" stroke="#000"/></g>
<g transform="translate(1239 285)"><circle cx="27" cy="12" r="4.500" fill="#f00"/><circle cx="12" cy="27" r="4.500" fill="#00f"/><path d="M15 24l8-8M19 16h4v4" fill="none" stroke="#000"/></g>
<g transform="translate(1119 325)"><path d="M10 27L28 10" stroke="#f00" stroke-width="2.500"/><path d="M11 29h18" stroke="#00f" stroke-width="3"/><path d="M25 22l-3-3M22 23v-4h4" stroke="#000" fill="none"/></g>
<g transform="translate(1159 325)"><path d="M9 27L18 19" stroke="#00f" stroke-width="3"/><path d="M18 19L28 10" stroke="#f00" stroke-width="3"/><path d="M22 24l3-3M22 21h3v3" stroke="#000" fill="none"/></g>
<g transform="translate(1199 325)"><path d="M18 11a7 8 0 0 1 2 15l-6 1" fill="none" stroke="#000" stroke-width="1.500"/><path d="M14 23l-4 4 5 3z"/></g>
<g transform="translate(1239 325)" fill="none"><path d="M8 11h10v16M8 18h9" stroke="#00f" stroke-width="2.500"/><path d="M20 8v23" stroke="#000"/><path d="M32 11H24v19M24 19h7" stroke="#f00" stroke-width="2.500"/></g>
<g transform="translate(1119 365)"><rect x="21" y="5" width="12" height="12" fill="#f00"/><circle cx="27" cy="11" r="4" fill="#ccc"/><rect x="7" y="21" width="10" height="11" fill="none" stroke="#00f"/><circle cx="12" cy="26.500" r="3" fill="#00f"/><path d="M17 21l3-3M18 18h2v2" stroke="#000" fill="none"/></g>
<g transform="translate(1159 365)"><path d="M8 18h21" stroke="#f00" stroke-width="3"/><path d="M14 18h9" stroke="#00f" stroke-width="3"/></g>
<g transform="translate(1199 365)" fill="none"><path d="M7 7v24M30 7v24" stroke="#000"/><rect x="15" y="13" width="7" height="10" stroke="#00f"/><path d="M8 18h6M23 18h6M8 18l2-2M8 18l2 2M29 18l-2-2M29 18l-2 2" stroke="#00f"/><text x="18.500" y="21" text-anchor="middle" style="font:bold 8px 'Liberation Sans',sans-serif;fill:#00f;stroke:none">4</text></g>
<g transform="translate(1239 365)"><path d="M8 10h14v7h8v12H12v-7H8z" fill="#00f"/><circle cx="13" cy="15" r="4" fill="#ccc"/><circle cx="23" cy="23" r="5" fill="#ccc"/></g>
<g transform="translate(1119 405)" fill="none"><path d="M20 11L9 26h20z" stroke="#f00" stroke-width="2"/><path d="M9 27h21" stroke="#00f" stroke-width="2.500"/><path d="M20 24v-6M18 20l2-2 2 2" stroke="#000"/></g>
<g transform="translate(1159 405)" fill="none"><path d="M7 33L18 8l11 25" stroke="#f00" stroke-width="2.500"/><path d="M7 33l11-12 11 12" stroke="#00f" stroke-width="2.500"/><path d="M18 19v-6M16 15l2-2 2 2" stroke="#000"/></g>
<g transform="translate(1199 405)" fill="none"><path d="M8 24L13 10h9l6 14" stroke="#f00" stroke-width="3"/><path d="M6 34l3-10h20l3 10" stroke="#00f" stroke-width="3"/><path d="M18 21v-7M16 16l2-2 2 2" stroke="#000"/></g>
<g transform="translate(1239 405)" fill="none"><path d="M8 24L13 10h9l6 14" stroke="#f00" stroke-width="3"/><path d="M4 24h29" stroke="#00f" stroke-width="2.500"/><path d="M18 20v-7M16 15l2-2 2 2M5 21l6 6M11 21l-6 6M26 21l6 6M32 21l-6 6" stroke="#000"/></g>
<!-- orange -->
<use href="#cur" x="1134" y="455"/>
<rect x="1167.500" y="452.500" width="21" height="22" fill="none" stroke="#f00" stroke-width="2"/><use href="#cur" x="1174" y="455"/>
<path d="M1213 453h18v22h-16l-5-6v-11z" fill="none" stroke="#f00" stroke-width="2"/><use href="#cur" x="1214" y="455"/>
<g transform="translate(1239 445)"><path d="M10 6v17M10 23h7v-10h8v-3" fill="none" stroke="#000"/><circle cx="10" cy="19" r="2.500" fill="#f00" stroke="#000" stroke-width=".5"/><circle cx="9" cy="28" r="2.500" fill="#0f4" stroke="#000" stroke-width=".5"/><circle cx="27" cy="11" r="2.500" fill="#0f4" stroke="#000" stroke-width=".5"/><path d="M23 15v16l3-3 3 6 3-1-3-6h4z"/></g>

<!-- minimap -->
<rect x="1116" y="487" width="164" height="177" fill="#000"/><rect x="1116" y="487" width="2" height="177" fill="#2e6e5e"/>
<rect x="1118" y="523" width="110" height="76" fill="#f00"/>
<rect x="1140.500" y="488.500" width="117" height="128" fill="none" stroke="#449900"/>
<rect x="1145" y="494" width="106" height="116" rx="1" fill="none" stroke="#fff" stroke-width="2"/>
<rect x="1144" y="523" width="2" height="76" fill="#0ff"/>
<path d="M1142 607l6 6M1148 607l-6 6" stroke="#fff"/>
<rect x="1118" y="618" width="162" height="44" fill="#52c8a8"/><rect x="1116" y="617" width="164" height="1" fill="#a8eed8"/><rect x="1118" y="660" width="162" height="2" fill="#a8eed8"/><rect x="1116" y="618" width="2" height="44" fill="#2e6e5e"/>
<text class="mono" x="1121" y="636">X = 48.237057mm</text><text class="mono" x="1121" y="652">Y = 79.409240mm</text>

<!-- command row -->
<rect x="0" y="662" width="1280" height="66" fill="#000"/>
<rect x="0" y="664" width="1197" height="31" fill="#ffffcc"/>
<rect x="1" y="664" width="31" height="30" fill="#dcdcb0"/><rect x="4" y="666" width="26" height="26" fill="#ffffcc"/><rect x="7.500" y="669.500" width="19" height="19" fill="none" stroke="#000"/>
<path d="M10 672l14 14M10 672h4M10 672v4M24 686h-4M24 686v-4" stroke="#000" fill="none"/>
<rect x="33" y="664" width="31" height="30" fill="#dcdcb0"/><rect x="36" y="666" width="26" height="26" fill="#ffffcc"/><rect x="39.500" y="669.500" width="19" height="19" fill="none" stroke="#000"/>
<path d="M42 686l13-14M49 686h7" stroke="#000" fill="none"/><text x="42" y="679" style="font:bold 8px 'Liberation Sans',sans-serif;fill:#000">1</text><text x="49" y="686" style="font:bold 6px 'Liberation Sans',sans-serif;fill:#000">∝</text>
<rect x="65" y="664" width="30" height="31" fill="#52c8a8"/><rect x="67" y="666" width="26" height="26" fill="#dcdcb0"/><rect x="69" y="668" width="22" height="22" fill="#ffffcc"/><path d="M73.500 686.500V677l5-5h8.500v14.500zM80 672v14M74 679h13" fill="none" stroke="#000"/>
<text class="s" x="97" y="684" textLength="36" style="font-size:14px">X Y :</text>
<rect x="143" y="664" width="1" height="31" fill="#52c8a8"/><rect x="146" y="666" width="169" height="28" fill="#ffffcc" stroke="#c4c4a0" stroke-width="2"/>
<path d="M152 669v10" stroke="#000" stroke-dasharray="1 1"/><path d="M150.500 668.500h3M150.500 679.500h3" stroke="#000" stroke-width=".7"/>
<rect x="316" y="664" width="1" height="31" fill="#52c8a8"/><rect x="317" y="664" width="30" height="31" fill="#52c8a8"/><rect x="319" y="666" width="26" height="26" fill="#dcdcb0"/><rect x="321" y="668" width="22" height="22" fill="#ffffcc"/><rect x="323.500" y="670.500" width="17" height="17" fill="none" stroke="#000"/><path d="M332 673v9" stroke="#000" stroke-width="1.500"/><rect x="331" y="683.500" width="2" height="2"/>
<rect x="348" y="664" width="1" height="31" fill="#52c8a8"/>
<text class="s" x="352" y="683">&lt;M1&gt; - Select first corner</text>
<rect x="1197" y="664" width="3" height="31" fill="#000"/><rect x="1200" y="664" width="80" height="31" fill="#52c8a8"/>
<rect x="1207" y="666" width="69" height="26" fill="#a8eed8"/><path d="M1276 666V692H1207L1209 690H1274V668z" fill="#2e6e5e"/><rect x="1209" y="668" width="65" height="22" fill="#52c8a8"/>
<text class="s" x="1213" y="684" style="font-size:13px">MM</text>
<rect x="1258" y="678" width="11" height="5" fill="#a8eed8" stroke="#2e6e5e"/>
<rect x="0" y="695" width="1280" height="33" fill="#9ddbdb"/><rect x="0" y="695" width="1280" height="2" fill="#6e8e8e"/>
<rect x="1.500" y="699.500" width="1277" height="26" fill="#fff" stroke="#000"/>
<rect x="5" y="702" width="1272" height="22" fill="#aeffff"/><path d="M1277 702V724H5L6 722.500H1275.500V702z" fill="#5f8a8a"/>
<text class="s" x="468" y="716" textLength="343">drl.d,#2234,Pad,X=7.649985,Y=90.3000575,r1000,POS</text>

<!-- taskbar -->
<rect y="728" width="1280" height="40" fill="url(#task)"/><rect y="728" width="60" height="40" fill="#1a2a60" opacity=".4"/>
<circle cx="26.500" cy="748" r="19" fill="url(#orb)" stroke="#10204a"/>
<path d="M17 742l8-1v6.500h-8zM27 741l9-1v7h-9z" fill="#f0522a"/><path d="M27 741l9-1v7h-9z" fill="#8cc63f"/><path d="M17 749h8v6.500l-8-1zM27 749h9v7l-9-1z" fill="#3aa0e0"/><path d="M27 749h9v7l-9-1z" fill="#ffc020"/>
<g stroke="#fff" stroke-opacity=".3"><rect x="60.500" y="729.500" width="70" height="37" rx="2" fill="url(#tbtn)"/><rect x="134.500" y="729.500" width="70" height="37" rx="2" fill="url(#tbtn)"/><rect x="208.500" y="729.500" width="70" height="37" rx="2" fill="url(#tbtn)"/><rect x="282.500" y="729.500" width="70" height="37" rx="2" fill="url(#tbtn)"/><rect x="356.500" y="729.500" width="70" height="37" rx="2" fill="url(#tbtn)"/><rect x="430.500" y="729.500" width="70" height="37" rx="2" fill="url(#tbtn)"/><rect x="504.500" y="729.500" width="70" height="37" rx="2" fill="url(#tbtn)"/><rect x="575.500" y="729.500" width="70" height="37" rx="2" fill="url(#tbtn)"/><rect x="647.500" y="729.500" width="70" height="37" rx="2" fill="url(#tact)"/><rect x="719.500" y="729.500" width="70" height="37" rx="2" fill="url(#tbtn)"/><rect x="794.500" y="729.500" width="70" height="37" rx="2" fill="url(#tbtn)"/><rect x="868.500" y="729.500" width="70" height="37" rx="2" fill="url(#tbtn)"/><rect x="942.500" y="729.500" width="70" height="37" rx="2" fill="url(#tbtn)"/></g>
<path d="M66 751a14 14 0 0 1 28 0l-5 8h-18z" fill="#f0b060"/><path d="M70 750l6 8M76 742l3 16M86 743l-4 15M92 750l-6 8" stroke="#c87830"/><path d="M80 743l3 6 6 1-4 4 1 6-6-3-6 3 1-6-4-4 6-1z" fill="#e85a20"/>
<path d="M153 737h14l-6 6h5l-4 14h-13l-8 5 3-12z" fill="#d8281c"/><path d="M148 748h8l-3 6h-7z" fill="#602020"/>
<rect x="212" y="735" width="32" height="28" rx="1" fill="#1f50a8"/><rect x="222" y="735" width="12" height="9" fill="#e8e8f0"/><rect x="226" y="736" width="4" height="7" fill="#1f50a8"/><rect x="217" y="747" width="24" height="15" fill="#f0f0f0"/><path d="M218 751h22M218 755h22M218 759h22" stroke="#c82030" stroke-width="1.500"/>
<rect x="291" y="736" width="24" height="26" rx="2" fill="#dfeef8" stroke="#8ab"/><path d="M294 740h18M294 744h18M294 748h18M294 752h18M294 756h18" stroke="#3a90d8" stroke-width="2"/>
<path d="M366 737h22l-2 12h-10l-3 13h-7z" fill="#1d9a4c"/><path d="M376 741h15l-2 11h-10l-2 10h-5z" fill="#b8b8b8"/>
<ellipse cx="453" cy="750" rx="15" ry="11" fill="#2a3a40"/><ellipse cx="453" cy="749" rx="9" ry="7" fill="#18b8b0"/><circle cx="453" cy="749" r="3.500" fill="#e0c020"/><path d="M436 738l10-3 6 6-12 1z" fill="#20a8a0"/>
<use href="#xw" x="510" y="735"/><use href="#xw" x="582" y="735"/><use href="#xw" x="653" y="735"/><use href="#xw" x="725" y="735"/>
<ellipse cx="817" cy="750" rx="15" ry="11" fill="#2a3a40"/><ellipse cx="818" cy="749" rx="9" ry="7" fill="#18b8b0"/><circle cx="818" cy="749" r="3.500" fill="#e0c020"/><path d="M800 738l10-3 6 6-12 1z" fill="#20a8a0"/>
<path d="M877 736h16l7 6v20h-23z" fill="#f4f8fc" stroke="#8aa0c0"/><path d="M881 746h15M881 750h15M881 754h15" stroke="#7a90b8"/><rect x="875" y="736" width="13" height="13" fill="#2a50b0"/><text x="876.500" y="747" style="font:italic bold 11px 'Liberation Serif',serif;fill:#fff">W</text>
<rect x="948" y="736" width="30" height="28" rx="3" fill="#0a5ea8"/><path d="M956 741h17l-2 5h-10l-1 3h9l-2 5h-9l-2 7h-6z" fill="#fff"/>
<text class="t" x="100" y="753">兴...</text><text class="t" x="175" y="753">Fo...</text><text class="t" x="249" y="753">To...</text><text class="t" x="323" y="753">制...</text><text class="t" x="397" y="753">工...</text><text class="t" x="471" y="753">ge...</text><text class="t" x="545" y="753">En...</text><text class="t" x="617" y="753">Pr...</text><text class="t" x="689" y="753">Gr...</text><text class="t" x="761" y="753">Di...</text><text class="t" x="835" y="753">C...</text><text class="t" x="908" y="753">孔...</text><text class="t" x="983" y="753">王凡</text>
<!-- tray -->
<path d="M1022 742l14 14M1036 742l-14 14" stroke="#9030b0" stroke-width="2.500"/>
<path d="M1048 742h12l-3 3h-5l-1 3h5l-2 3h-4l-2 6h-3z" fill="#1a8af0"/>
<path d="M1075 741v14h-5M1072 743h10v14h-10z" fill="none" stroke="#fff" stroke-width="1.500"/>
<path d="M1102 743a6 6 0 1 0-5 10" fill="none" stroke="#e02020" stroke-width="2.500"/><rect x="1100" y="749" width="9" height="7" fill="#f0d080"/>
<path d="M1126 755l7-14 8 14z" fill="#20c040"/><path d="M1126 755l7-14 1 8z" fill="#e02020"/>
<path d="M1143 746h3l4-4v12l-4-4h-3z" fill="#e8e8e8"/><path d="M1152 745a4 4 0 0 1 0 6" stroke="#e8e8e8" fill="none"/>
<path d="M1169 741v16" stroke="#ddd" stroke-width="1.500"/><path d="M1170 741h9l-2 4 2 4h-9z" fill="#eee"/><circle cx="1178" cy="752" r="4.500" fill="#e02020"/><path d="M1176 750l4 4M1180 750l-4 4" stroke="#fff"/>
<text class="c" x="1227" y="744" text-anchor="middle">22:06</text><text class="c" x="1227" y="761" text-anchor="middle">2016/9/5</text>
<rect x="1267" y="728" width="13" height="40" fill="#5a2a3a"/><rect x="1267" y="728" width="1" height="40" fill="#806070"/>
</svg>
</body></html>
